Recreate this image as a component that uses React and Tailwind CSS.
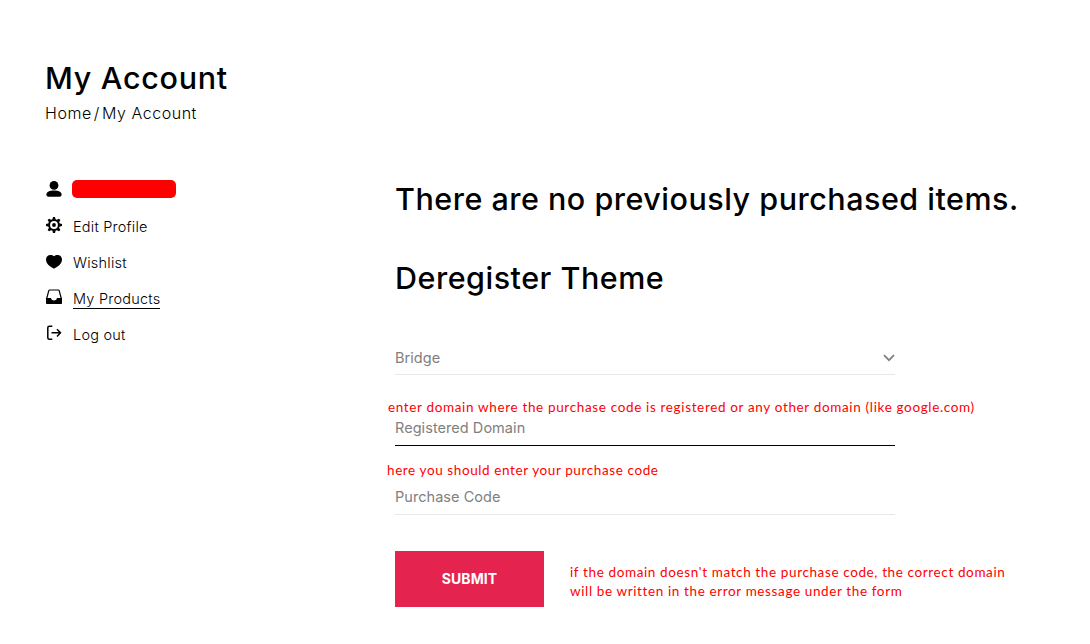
import React from 'react';

function PersonIcon() {
  return (
    <svg viewBox="0 0 16 16" className="w-4 h-4" fill="currentColor">
      <circle cx="8" cy="4.4" r="4.4" />
      <path d="M0.4 13.6C0.4 11 3.8 9.6 8 9.6s7.600 1.400 7.600 4c0 1.500-1 2.200-2.300 2.200H2.700C1.400 15.800 0.400 15.100 0.400 13.600z" />
    </svg>
  );
}

function GearIcon() {
  const teeth = [0, 45, 90, 135, 180, 225, 270, 315];

  return (
    <svg viewBox="0 0 16 16" className="w-4 h-4" fill="currentColor">
      <circle cx="8" cy="8" r="4.9" fill="none" stroke="currentColor" strokeWidth="2" />
      <circle cx="8" cy="8" r="1.9" />
      {teeth.map((angle) => (
        <path key={angle} d="M6.300 2.800L7 0h2l0.700 2.800z" transform={`rotate(${angle} 8 8)`} />
      ))}
    </svg>
  );
}

function HeartIcon() {
  return (
    <svg viewBox="0 0 16 16" className="w-4 h-4" fill="currentColor">
      <path d="M8 3.200C9 2.300 10.200 1.900 11.600 1.900 14.100 1.900 16 3.900 16 6.600c0 4.400-4 7.200-8 9.100C4 13.800 0 11 0 6.600 0 3.900 1.900 1.900 4.400 1.900 5.800 1.900 7 2.300 8 3.200z" />
    </svg>
  );
}

function InboxIcon() {
  return (
    <svg viewBox="0 0 16 16" className="w-4 h-4">
      <path d="M0.700 9.500L2.800 1.600c0.100-0.400 0.400-0.600 0.800-0.600h8.800c0.400 0 0.700 0.200 0.800 0.600l2.100 7.900" fill="none" stroke="currentColor" strokeWidth="1.200" />
      <path d="M0 9h5c0.200 1.500 1.300 2.500 3 2.500s2.800-1 3-2.500h5v5c0 0.700-0.400 1-1 1H1c-0.600 0-1-0.300-1-1z" fill="currentColor" />
    </svg>
  );
}

function LogoutIcon() {
  return (
    <svg viewBox="0 0 16 16" className="w-4 h-4" fill="none" stroke="currentColor" strokeWidth="1.500">
      <path d="M6.300 1.300H3.300c-0.900 0-1.500 0.600-1.500 1.500v9.900c0 0.900 0.600 1.500 1.500 1.500h3" />
      <path d="M5.500 7.800h9M11 4.200L14.500 7.800 11 11.400" />
    </svg>
  );
}

const menu = [
  { icon: PersonIcon },
  { icon: GearIcon, label: 'Edit Profile' },
  { icon: HeartIcon, label: 'Wishlist' },
  { icon: InboxIcon, label: 'My Products', active: true },
  { icon: LogoutIcon, label: 'Log out' },
];

export default function App() {
  return (
    <div className="w-[1090px] h-[644px] overflow-hidden bg-white text-black font-['Inter',sans-serif] whitespace-nowrap">
      {/* Page title */}
      <header className="pt-[58px] pl-[45px]">
        <h1 className="text-[30.5px] leading-10 font-medium tracking-[0.7px]">My Account</h1>
        <nav className="flex gap-[2px] text-[16px] leading-[30px] font-light tracking-[0.550px]">
          <a>Home</a>
          <span>/</span>
          <a>My Account</a>
        </nav>
      </header>

      <div className="flex pl-[45px] pt-[43px]">
        {/* Account menu */}
        <ul className="w-[350px] shrink-0 pt-px">
          {menu.map(({ icon: Icon, label, active }, index) => (
            <li key={index} className="flex items-center h-9 pl-px">
              <span className="mb-[2px]">
                <Icon />
              </span>
              {label ? (
                <a className={`ml-[11px] text-[14.5px] leading-[19px] pt-px -mb-px font-light tracking-[0.220px] border-b ${active ? 'border-black' : 'border-transparent'}`}>
                  {label}
                </a>
              ) : (
                <span className="ml-[10px] mb-[2px] w-[104px] h-[18px] rounded-[5px] bg-[#ff0000]" />
              )}
            </li>
          ))}
        </ul>

        <main className="pt-[8px]">
          <h2 className="text-[30.5px] leading-10 font-medium tracking-[0.5px]">There are no previously purchased items.</h2>
          <h2 className="mt-[39px] text-[30.5px] leading-10 font-medium tracking-[0.5px]">Deregister Theme</h2>

          {/* Deregister form */}
          <form className="mt-[42px] text-[14.5px] tracking-[0.050px] text-[#808080]">
            <div className="flex items-center justify-between w-[500px] h-[35px] pt-px border-b border-[#e8e8e8]">
              <span>Bridge</span>
              <svg viewBox="0 0 12 8" className="w-3 h-2" fill="none" stroke="currentColor" strokeWidth="1.800">
                <path d="M1 1.200L6 6.200l5-5" />
              </svg>
            </div>

            <p className="-ml-[7px] mt-[22px] mb-px h-5 font-['Lato',sans-serif] text-[13.5px] leading-5 tracking-[0.650px] text-[#ff0000]">
              enter domain where the purchase code is registered or any other domain (like google.com)
            </p>
            <div className="w-[500px] h-[28px] pb-2 leading-5 border-b border-black">Registered Domain</div>

            <p className="-ml-[8px] mt-[14px] mb-px h-5 font-['Lato',sans-serif] text-[13.5px] leading-5 tracking-[0.600px] text-[#ff0000]">
              here you should enter your purchase code
            </p>
            <div className="w-[500px] h-[34px] pt-[6px] leading-5 border-b border-[#e8e8e8]">Purchase Code</div>

            <div className="flex mt-9">
              <button type="button" className="w-[149px] h-14 pb-[2px] bg-[#e4244f] text-white text-[14px] font-bold">
                SUBMIT
              </button>
              <p className="ml-[26px] mt-3 font-['Lato',sans-serif] text-[13.5px] leading-[19px] tracking-[0.620px] text-[#ff0000]">
                if the domain doesn't match the purchase code, the correct domain
                <br />
                will be written in the error message under the form
              </p>
            </div>
          </form>
        </main>
      </div>
    </div>
  );
}
